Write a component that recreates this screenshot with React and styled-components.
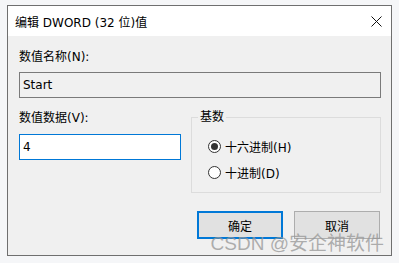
import React, { useState } from 'react';
import styled, { createGlobalStyle } from 'styled-components';

const GlobalStyle = createGlobalStyle`
  html, body {
    margin: 0;
    padding: 0;
    background: #f5f6f8;
  }
  body {
    font-family: "DejaVu Sans", "Noto Sans CJK SC", sans-serif;
    font-size: 12px;
    color: #000;
  }
`

const Page = styled.div`
  padding: 5px 0 0 7px;
`
const Window = styled.div`
  position: relative;
  width: 385px;
  height: 251px;
  box-sizing: border-box;
  border: 1px solid #6f6f6f;
  background: #f0f0f0;
  display: flex;
  flex-direction: column;
`
const TitleBar = styled.div`
  height: 30px;
  background: #fff;
  display: flex;
  align-items: center;
  justify-content: space-between;
  padding: 0 9px 0 7px;
`
const Body = styled.div`
  padding: 13px 10px 0 11px;
  display: flex;
  flex-direction: column;
`
const Label = styled.div`
  height: 16px;
  line-height: 16px;
  white-space: nowrap;
`
const Field = styled.div`
  box-sizing: border-box;
  height: 26px;
  margin-top: ${props => props.gap || 7}px;
  border: 1px solid ${props => props.focused ? '#0078d7' : '#7a7a7a'};
  background: ${props => props.focused ? '#fff' : '#f0f0f0'};
  display: flex;
  align-items: center;
  padding-left: 3px;
`
const Row = styled.div`
  display: flex;
  justify-content: space-between;
  margin-top: 12px;
`
const Column = styled.div`
  display: flex;
  flex-direction: column;
  width: 162px;
`
const GroupBox = styled.fieldset`
  margin: 0;
  box-sizing: border-box;
  width: 190px;
  height: 84px;
  border: 1px solid #dcdcdc;
  padding: 13px 0 0 16px;
  display: flex;
  flex-direction: column;
  gap: 10px;
  position: relative;
  top: -1px;
`
const Legend = styled.legend`
  padding: 0 2px;
  margin-left: -10px;
  line-height: 16px;
`
const RadioRow = styled.label`
  display: flex;
  align-items: center;
  gap: 4px;
  height: 16px;
  cursor: default;
`
const RadioCircle = styled.span`
  width: 13px;
  height: 13px;
  box-sizing: border-box;
  border-radius: 50%;
  border: 1px solid #333;
  background: #fff;
  display: flex;
  align-items: center;
  justify-content: center;
  &::after {
    content: '';
    width: 7px;
    height: 7px;
    border-radius: 50%;
    background: ${props => props.checked ? '#333' : 'transparent'};
  }
`
const ButtonRow = styled.div`
  display: flex;
  justify-content: flex-end;
  gap: 11px;
  margin-top: 17px;
  padding-right: 1px;
`
const Button = styled.div`
  box-sizing: border-box;
  width: 86px;
  height: 28px;
  background: #e1e1e1;
  border: ${props => props.primary ? '2px solid #0078d7' : '1px solid #adadad'};
  display: flex;
  align-items: center;
  justify-content: center;
`
const Watermark = styled.div`
  position: absolute;
  right: 7px;
  bottom: 0px;
  font-family: "Liberation Sans", "Noto Sans CJK SC", sans-serif;
  font-size: 19px;
  line-height: 22px;
  color: rgba(150, 150, 150, 0.75);
  white-space: nowrap;
  pointer-events: none;
`

const CloseIcon = () => (
  <svg width="11" height="11" viewBox="0 0 11 11">
    <path d="M0.5 0.5 L10.5 10.5 M10.5 0.5 L0.5 10.5" stroke="#111" strokeWidth="1" fill="none" />
  </svg>
)

const App = () => {
  const [base, setBase] = useState('hex');
  return (
    <>
      <GlobalStyle />
      <Page>
        <Window>
          <TitleBar>
            <span>编辑 DWORD (32 位)值</span>
            <CloseIcon />
          </TitleBar>
          <Body>
            <Label>数值名称(N):</Label>
            <Field>Start</Field>
            <Row>
              <Column>
                <Label>数值数据(V):</Label>
                <Field focused gap={8}>4</Field>
              </Column>
              <GroupBox>
                <Legend>基数</Legend>
                <RadioRow onClick={() => setBase('hex')}>
                  <RadioCircle checked={base === 'hex'} />
                  十六进制(H)
                </RadioRow>
                <RadioRow onClick={() => setBase('dec')}>
                  <RadioCircle checked={base === 'dec'} />
                  十进制(D)
                </RadioRow>
              </GroupBox>
            </Row>
            <ButtonRow>
              <Button primary>确定</Button>
              <Button>取消</Button>
            </ButtonRow>
          </Body>
          <Watermark>CSDN @安企神软件</Watermark>
        </Window>
      </Page>
    </>
  );
};
export default App;
